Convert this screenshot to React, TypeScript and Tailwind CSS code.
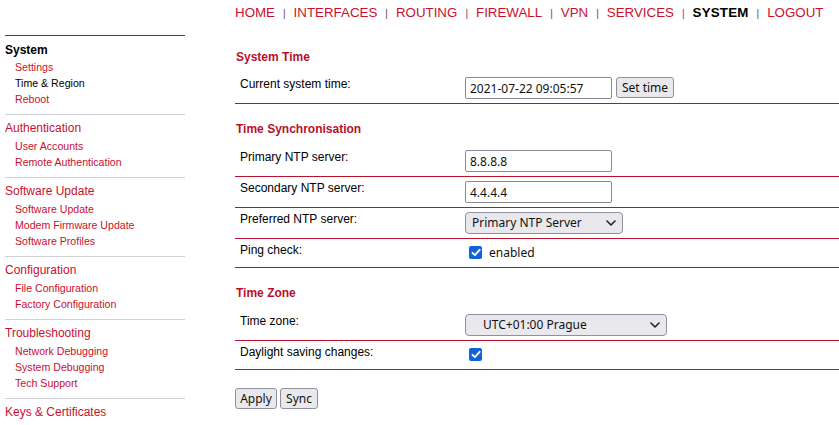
import React from "react";

const RED = "text-[#c8102e]";

function Pipe() {
  return <span className="mx-[8px] text-[10px] text-[#5a4a55] relative top-[0px]">|</span>;
}

function Nav() {
  const items = ["HOME", "INTERFACES", "ROUTING", "FIREWALL", "VPN", "SERVICES"];
  return (
    <div className="h-[26px] flex items-center text-[13.33px] whitespace-nowrap">
      {items.map((it) => (
        <React.Fragment key={it}>
          <span className={RED}>{it}</span>
          <Pipe />
        </React.Fragment>
      ))}
      <span className="font-bold text-black tracking-[0.2px]">SYSTEM</span>
      <Pipe />
      <span className={RED}>LOGOUT</span>
    </div>
  );
}

type Section = { title: string; items: { label: string; active?: boolean }[]; first?: boolean };

const sections: Section[] = [
  {
    title: "System",
    first: true,
    items: [{ label: "Settings" }, { label: "Time & Region", active: true }, { label: "Reboot" }],
  },
  { title: "Authentication", items: [{ label: "User Accounts" }, { label: "Remote Authentication" }] },
  {
    title: "Software Update",
    items: [{ label: "Software Update" }, { label: "Modem Firmware Update" }, { label: "Software Profiles" }],
  },
  { title: "Configuration", items: [{ label: "File Configuration" }, { label: "Factory Configuration" }] },
  {
    title: "Troubleshooting",
    items: [{ label: "Network Debugging" }, { label: "System Debugging" }, { label: "Tech Support" }],
  },
];

function Sidebar() {
  return (
    <aside className="ml-[5px] w-[180px] shrink-0 pt-[35px]">
      <div className="h-px bg-[#b5152b]" />
      <div className="pt-[5px]">
        {sections.map((s) => (
          <div key={s.title}>
            <div
              className={
                s.first
                  ? "text-[12px] leading-[18px] font-bold text-black"
                  : "text-[12px] leading-[18px] mb-[1px] " + RED
              }
            >
              {s.title}
            </div>
            {s.items.map((i) => (
              <div
                key={i.label}
                className={
                  "pl-[10px] text-[10.6px] leading-[16px] " + (i.active ? "text-black" : RED)
                }
              >
                {i.label}
              </div>
            ))}
            <div className="mt-[7px] mb-[4px] h-px bg-[#d2d2da]" />
          </div>
        ))}
        <div className={"text-[12px] leading-[18px] " + RED}>Keys &amp; Certificates</div>
      </div>
    </aside>
  );
}

function Title({ children, first }: { children: React.ReactNode; first?: boolean }) {
  return (
    <div
      className={
        (first ? "mt-[24px] mb-[9px]" : "mt-[18px] mb-[10px]") +
        " text-[12px] leading-[14px] font-bold text-[#b8102c] pl-[1px]"
      }
    >
      {children}
    </div>
  );
}

function Row({ label, children, check }: { label: string; children: React.ReactNode; check?: boolean }) {
  return (
    <div className={"flex border-b border-[#b8142d] pt-[4px] " + (check ? "pb-[5px]" : "pb-[4px]")}>
      <div className="w-[230px] shrink-0 pl-[5px] text-[12px] leading-[14px] text-black">{label}</div>
      <div className="flex items-start">{children}</div>
    </div>
  );
}

const ctrlFont = "font-['Noto_Sans','Open_Sans',sans-serif] text-[12px] text-[#111]";

function TextInput({ value }: { value: string }) {
  return (
    <input
      readOnly
      value={value}
      className={
        "w-[147px] h-[22px] border border-[#8a8a96] rounded-[2px] px-[4px] bg-white outline-none " + ctrlFont
      }
    />
  );
}

function Btn({ children, w }: { children: React.ReactNode; w: string }) {
  return (
    <button
      className={
        w +
        " h-[21px] bg-[#e9e9ed] border border-[#8f8f9d] rounded-[3px] flex items-center justify-center leading-none " +
        ctrlFont
      }
    >
      {children}
    </button>
  );
}

function Select({ value, w, pl }: { value: string; w: string; pl: string }) {
  return (
    <div
      className={
        w +
        " h-[22px] bg-[#e9e9ed] border border-[#8f8f9d] rounded-[4px] flex items-center justify-between pr-[6px] " +
        pl +
        " " +
        ctrlFont
      }
    >
      <span>{value}</span>
      <svg width="10" height="6" viewBox="0 0 10 6" fill="none">
        <path d="M1 1l4 4 4-4" stroke="#222" strokeWidth="1.6" strokeLinecap="round" strokeLinejoin="round" />
      </svg>
    </div>
  );
}

function Check() {
  return (
    <div className="mt-[3px] mb-[3px] ml-[4px] w-[13px] h-[13px] rounded-[2px] bg-[#0e64d8] flex items-center justify-center">
      <svg width="10" height="9" viewBox="0 0 10 9" fill="none">
        <path d="M1.5 4.8l2.4 2.4L8.6 1.8" stroke="white" strokeWidth="1.9" strokeLinecap="round" strokeLinejoin="round" />
      </svg>
    </div>
  );
}

export default function App() {
  return (
    <div className="w-[839px] h-[425px] overflow-hidden bg-white flex font-['Liberation_Sans',Arial,sans-serif]">
      <Sidebar />
      <main className="ml-[50px] flex-1 min-w-0">
        <Nav />
        <Title first>System Time</Title>
        <Row label="Current system time:">
          <TextInput value="2021-07-22 09:05:57" />
          <div className="ml-[4px]">
            <Btn w="w-[58px]">Set time</Btn>
          </div>
        </Row>

        <Title>Time Synchronisation</Title>
        <Row label="Primary NTP server:">
          <TextInput value="8.8.8.8" />
        </Row>
        <Row label="Secondary NTP server:">
          <TextInput value="4.4.4.4" />
        </Row>
        <Row label="Preferred NTP server:">
          <Select value="Primary NTP Server" w="w-[158px]" pl="pl-[6px]" />
        </Row>
        <Row label="Ping check:" check>
          <Check />
          <span className={"ml-[7px] mt-[3px] leading-[14px] " + ctrlFont}>enabled</span>
        </Row>

        <Title>Time Zone</Title>
        <Row label="Time zone:">
          <Select value="UTC+01:00 Prague" w="w-[202px]" pl="pl-[17px]" />
        </Row>
        <Row label="Daylight saving changes:" check>
          <Check />
        </Row>

        <div className="mt-[18px] flex gap-[3px]">
          <Btn w="w-[42px]">Apply</Btn>
          <Btn w="w-[38px]">Sync</Btn>
        </div>
      </main>
    </div>
  );
}
